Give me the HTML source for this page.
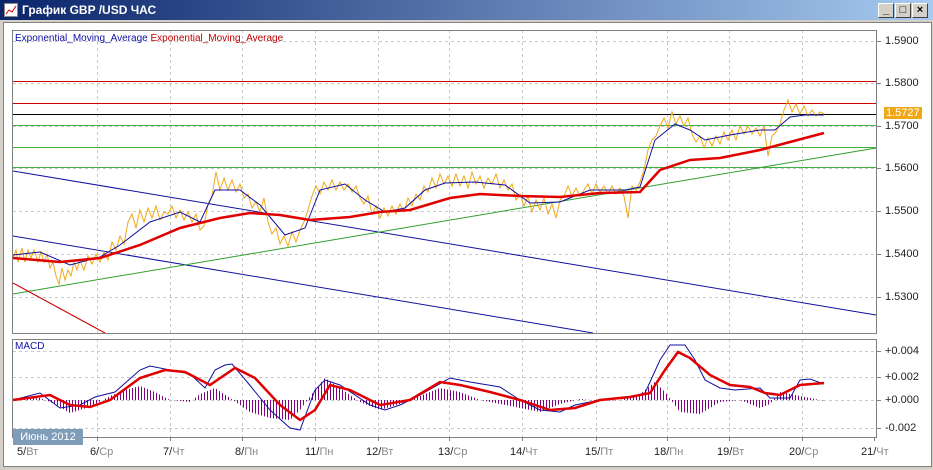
<!DOCTYPE html>
<html><head><meta charset="utf-8"><style>
body{margin:0;width:933px;height:470px;background:#d4d0c8;overflow:hidden;font-family:"Liberation Sans",sans-serif;position:relative}
.title{position:absolute;left:0;top:0;width:933px;height:20px;background:linear-gradient(to right,#0a246a,#a6caf0)}
.title span{position:absolute;left:22px;top:3px;color:#fff;font-weight:bold;font-size:12px}
.btn{position:absolute;top:3px;width:14px;height:13px;background:#d4d0c8;border:1px solid;border-color:#fff #404040 #404040 #fff;font-size:11px;line-height:13px;text-align:center;font-weight:bold}
.body{position:absolute;left:3px;top:22px;width:927px;height:443px;background:#fff;border:1px solid #808080}
.lab{position:absolute;font-size:11px;color:#222}
.d{position:absolute;top:446px;font-size:11px;color:#222}
.d i{font-style:normal;color:#888}
</style></head><body>
<div class="title"><svg style="position:absolute;left:4px;top:3px" width="14" height="14"><rect x="0.5" y="0.5" width="13" height="13" fill="#fff" stroke="#888"/><polyline points="2,11 5,7 8,9 12,3" fill="none" stroke="#c00"/></svg><span>График GBP /USD ЧАС</span></div>
<div class="btn" style="left:878px">_</div><div class="btn" style="left:895px">□</div><div class="btn" style="left:912px">×</div>
<div class="body"></div>
<svg style="position:absolute;left:0;top:0" width="933" height="470" shape-rendering="auto">
<defs><pattern id="st" width="3" height="10" patternUnits="userSpaceOnUse"><rect x="0" y="0" width="1" height="10" fill="#800080"/></pattern></defs>
<g stroke="#c8c8c8" stroke-dasharray="3,3" stroke-width="1">
<path d="M13 41.5H876M13 83.5H876M13 126.5H876M13 168.5H876M13 211.5H876M13 254.5H876M13 297.5H876"/>
<path d="M97.5 30V333M170.5 30V333M242.5 30V333M315.5 30V333M378.5 30V333M449.5 30V333M522.5 30V333M596.5 30V333M667.5 30V333M729.5 30V333M802.5 30V333"/>
<path d="M97.5 339V437M170.5 339V437M242.5 339V437M315.5 339V437M378.5 339V437M449.5 339V437M522.5 339V437M596.5 339V437M667.5 339V437M729.5 339V437M802.5 339V437"/>
<path d="M13 351.5H876M13 377.5H876M13 400.5H876M13 428.5H876"/>
</g>
<rect x="13" y="81" width="863" height="1" fill="#d00000"/>
<rect x="13" y="103" width="863" height="1" fill="#d00000"/>
<rect x="13" y="114" width="863" height="1" fill="#000"/>
<rect x="13" y="125" width="863" height="1" fill="#40b040"/>
<rect x="13" y="147" width="863" height="1" fill="#40b040"/>
<rect x="13" y="167" width="863" height="1" fill="#40b040"/>
<g fill="none" stroke-width="1">
<path d="M13 171L876 315M13 236L593 333" stroke="#1010a0"/>
<path d="M13 294L876 148" stroke="#30a030"/>
<path d="M13 283L105 333" stroke="#d00000"/>
<polyline stroke="#f0a818" points="13,258 16,250 18,262 22,248 25,262 28,250 31,258 34,250 38,262 41,252 44,262 47,254 50,268 53,262 56,276 59,284 62,268 65,280 68,270 71,276 74,262 77,270 80,260 84,270 88,256 92,264 96,254 100,262 104,252 108,260 112,242 116,250 120,236 124,244 128,222 132,214 136,228 140,210 144,222 148,208 152,218 156,206 160,220 164,212 168,214 172,206 176,218 180,210 184,220 188,212 192,222 196,214 200,230 204,226 208,204 212,196 216,172 220,190 224,178 228,190 232,180 236,192 240,184 244,198 248,194 252,208 256,202 260,212 264,198 268,222 272,234 276,228 280,244 284,236 288,246 292,232 296,242 300,230 304,222 308,210 312,196 316,186 320,194 324,182 328,190 332,180 336,190 340,182 344,190 348,184 352,192 356,186 360,198 364,204 368,196 372,214 376,206 380,218 384,208 388,216 392,206 396,214 400,204 404,212 408,198 412,206 416,194 420,200 424,186 428,192 432,178 436,188 440,174 444,184 448,176 452,186 456,174 460,186 464,176 468,188 472,172 476,184 480,176 484,188 488,178 492,184 496,174 500,188 504,180 508,190 512,184 516,200 520,194 524,206 528,196 532,212 536,200 540,210 544,198 548,214 552,204 556,218 560,200 564,196 568,186 572,196 576,188 580,196 584,190 588,184 592,194 596,184 600,192 604,186 608,194 612,186 616,194 620,188 624,196 628,218 632,186 636,190 640,182 644,170 648,150 652,140 656,136 660,126 664,118 668,128 672,112 676,124 680,116 684,126 688,118 692,134 696,142 700,136 704,148 708,138 712,146 716,136 720,144 724,132 728,140 732,130 736,140 740,126 744,134 748,126 752,134 756,128 760,136 764,126 768,156 772,136 776,132 780,124 784,110 788,100 792,112 796,104 800,114 804,106 808,116 812,110 816,116 820,112 824,114"/>
<polyline stroke="#1010a0" points="13,255 40,252 70,265 100,257 120,245 150,222 180,212 200,222 215,190 240,190 260,205 285,235 305,228 320,190 345,184 365,200 385,212 405,208 425,190 445,183 475,182 505,185 530,203 560,202 590,190 625,190 640,187 655,140 675,124 690,130 705,140 730,135 760,130 775,130 790,117 805,115 824,115"/>
<polyline stroke="#e00000" stroke-width="2.5" points="13,258 60,262 100,258 140,245 180,228 220,218 250,213 280,215 310,220 350,217 380,212 410,210 450,198 480,194 520,196 560,197 600,193 640,192 660,170 690,160 720,158 760,150 790,142 824,133"/>
</g>
<path fill="url(#st)" d="M13 400L40 398 55 404 70 413 90 407 110 396 125 390 140 386 155 392 170 400 190 402 200 394 215 388 230 398 250 412 270 418 290 420 300 410 315 390 325 378 340 388 360 402 380 410 400 404 420 396 440 388 460 392 480 400 500 404 520 408 540 412 560 404 580 399 600 401 620 400 640 394 655 382 665 392 680 412 700 414 720 402 740 400 760 408 770 404 780 392 800 396 820 400 824 401 824 400Z"/>
<g fill="none">
<polyline stroke="#1010a0" points="13,400 40,393 60,408 80,405 95,397 115,392 140,370 150,366 170,370 190,374 205,388 215,370 225,365 232,364 248,383 270,410 290,428 300,430 315,390 325,380 340,385 370,405 385,410 400,405 420,395 450,378 470,382 500,387 520,400 540,410 560,412 575,405 600,400 625,398 645,393 660,360 670,345 685,345 695,360 705,380 720,388 735,390 760,388 770,398 790,398 800,380 810,379 824,384"/>
<polyline stroke="#e00000" stroke-width="2.5" points="13,400 50,395 70,405 90,407 110,400 140,378 165,370 185,372 210,385 235,368 255,378 280,405 300,420 315,410 330,385 350,390 380,405 410,400 440,382 460,385 490,392 520,400 550,410 575,408 600,400 630,397 650,393 665,370 678,352 690,358 710,375 730,385 750,387 765,393 780,395 800,385 824,383"/>
</g>
<rect x="12.5" y="30.5" width="864" height="303" fill="none" stroke="#808080"/>
<rect x="12.5" y="339.5" width="864" height="98" fill="none" stroke="#808080"/>
<path d="M877 41.5h4M877 83.5h4M877 126.5h4M877 168.5h4M877 211.5h4M877 254.5h4M877 297.5h4M877 351.5h4M877 377.5h4M877 400.5h4M877 428.5h4M97.5 437v4M170.5 437v4M242.5 437v4M315.5 437v4M378.5 437v4M449.5 437v4M522.5 437v4M596.5 437v4M667.5 437v4M729.5 437v4M802.5 437v4M874.5 437v4" stroke="#808080"/>
</svg>
<div style="position:absolute;left:15px;top:33px;font-size:10px;white-space:nowrap"><span style="color:#1010a0">Exponential_Moving_Average</span> <span style="color:#c00000">Exponential_Moving_Average</span></div>
<div style="position:absolute;left:15px;top:341px;font-size:10px;color:#1010a0">MACD</div>
<div class="lab" style="left:885px;top:35px">1.5900</div>
<div class="lab" style="left:885px;top:77px">1.5800</div>
<div class="lab" style="left:885px;top:120px">1.5700</div>
<div class="lab" style="left:885px;top:162px">1.5600</div>
<div class="lab" style="left:885px;top:205px">1.5500</div>
<div class="lab" style="left:885px;top:248px">1.5400</div>
<div class="lab" style="left:885px;top:291px">1.5300</div>
<div class="lab" style="left:884px;top:107px;background:#f0a818;color:#fff;padding:0 2px">1.5727</div>
<div class="lab" style="left:885px;top:345px">+0.004</div>
<div class="lab" style="left:885px;top:371px">+0.002</div>
<div class="lab" style="left:885px;top:394px">+0.000</div>
<div class="lab" style="left:885px;top:422px">-0.002</div>
<div style="position:absolute;left:13px;top:429px;width:70px;height:16px;background:#7f9db9;color:#fff;font-size:11px;line-height:16px;text-align:center">Июнь 2012</div>
<div class="d" style="left:17px">5/<i>Вт</i></div>
<div class="d" style="left:90px">6/<i>Ср</i></div>
<div class="d" style="left:163px">7/<i>Чт</i></div>
<div class="d" style="left:235px">8/<i>Пн</i></div>
<div class="d" style="left:305px">11/<i>Пн</i></div>
<div class="d" style="left:366px">12/<i>Вт</i></div>
<div class="d" style="left:438px">13/<i>Ср</i></div>
<div class="d" style="left:510px">14/<i>Чт</i></div>
<div class="d" style="left:585px">15/<i>Пт</i></div>
<div class="d" style="left:654px">18/<i>Пн</i></div>
<div class="d" style="left:717px">19/<i>Вт</i></div>
<div class="d" style="left:789px">20/<i>Ср</i></div>
<div class="d" style="left:861px">21/<i>Чт</i></div>
</body></html>
